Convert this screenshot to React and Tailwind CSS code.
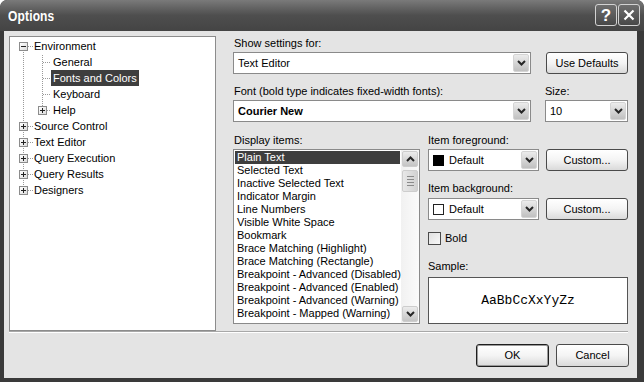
import React from "react";

const SANS = "font-['Liberation_Sans',Arial,sans-serif]";

function Chevron({ up = false }) {
  return (
    <svg width="9" height="6" viewBox="0 0 9 6">
      <path
        d={up ? "M1 5 L4.5 1.5 L8 5" : "M1 1 L4.5 4.5 L8 1"}
        stroke="#262626"
        strokeWidth="2"
        fill="none"
      />
    </svg>
  );
}

function DropBtn() {
  return (
    <div className="w-[16px] h-[18px] rounded-[2px] border border-[#d4d4d4] bg-gradient-to-b from-[#ececec] to-[#c0c0c0] flex items-center justify-center">
      <Chevron />
    </div>
  );
}

function Combo({ w, children }) {
  return (
    <div className={`flex items-center h-[22px] bg-white border border-[#8a8a8a] pl-[4px] pr-[1px] ${w}`}>
      <div className="flex-1 flex items-center min-w-0 text-[11px] text-black">{children}</div>
      <DropBtn />
    </div>
  );
}

function Btn({ children, w = "w-[82px]", h = "h-[22px]", def = false }) {
  return (
    <div
      className={`${w} ${h} flex items-center justify-center rounded-[3px] border ${
        def ? "border-[#1e1e1e] shadow-[inset_0_0_0_1px_#9a9a9a]" : "border-[#4a4a4a]"
      } bg-gradient-to-b from-white via-[#f4f4f4] to-[#dadada] text-[11px] text-black`}
    >
      {children}
    </div>
  );
}

function Expander({ plus }) {
  return (
    <div className="relative z-10 w-[9px] h-[9px] border border-[#8c8c8c] bg-gradient-to-br from-white to-[#dcdcdc] flex items-center justify-center shrink-0">
      <div className="absolute w-[5px] h-[1px] bg-[#222]" />
      {plus && <div className="absolute w-[1px] h-[5px] bg-[#222]" />}
    </div>
  );
}

function TreeRoot({ label, plus = true }) {
  return (
    <div className="h-[16px] flex items-center pl-[9px]">
      <Expander plus={plus} />
      <span className="ml-[5px] px-[1px] leading-[16px]">{label}</span>
    </div>
  );
}

function TreeChild({ label, selected = false, expander = false }) {
  return (
    <div className="h-[16px] flex items-center pl-[28px]">
      {expander ? <Expander plus /> : <div className="w-[9px] shrink-0" />}
      <span
        className={`ml-[4px] px-[2px] h-[16px] leading-[16px] ${
          selected ? "bg-[#3e3e3e] text-white" : "text-black"
        }`}
      >
        {label}
      </span>
    </div>
  );
}

function Tree() {
  const dot = { stroke: "#9a9a9a", strokeWidth: 1, strokeDasharray: "1 1" };
  return (
    <div className="relative w-[207px] h-[295px] bg-white border border-[#8c8c8c] text-[11px] text-black pt-[1px]">
      <svg className="absolute left-0 top-0 pointer-events-none" width="205" height="200">
        <line x1="13.5" y1="9" x2="13.5" y2="153" {...dot} />
        <line x1="32.5" y1="18" x2="32.5" y2="73" {...dot} />
        {[9, 89, 105, 121, 137, 153].map((y) => (
          <line key={y} x1="18" y1={y + 0.5} x2="23" y2={y + 0.5} {...dot} />
        ))}
        {[25, 41, 57].map((y) => (
          <line key={y} x1="33" y1={y + 0.5} x2="41" y2={y + 0.5} {...dot} />
        ))}
        <line x1="37" y1="73.5" x2="41" y2="73.5" {...dot} />
      </svg>
      <TreeRoot label="Environment" plus={false} />
      <TreeChild label="General" />
      <TreeChild label="Fonts and Colors" selected />
      <TreeChild label="Keyboard" />
      <TreeChild label="Help" expander />
      <TreeRoot label="Source Control" />
      <TreeRoot label="Text Editor" />
      <TreeRoot label="Query Execution" />
      <TreeRoot label="Query Results" />
      <TreeRoot label="Designers" />
    </div>
  );
}

function ScrollBtn({ up }) {
  return (
    <div className="h-[16px] w-[16px] rounded-[2px] border border-[#cdcdcd] bg-gradient-to-b from-[#ececec] to-[#c4c4c4] flex items-center justify-center">
      <Chevron up={up} />
    </div>
  );
}

const ITEMS = [
  "Plain Text",
  "Selected Text",
  "Inactive Selected Text",
  "Indicator Margin",
  "Line Numbers",
  "Visible White Space",
  "Bookmark",
  "Brace Matching (Highlight)",
  "Brace Matching (Rectangle)",
  "Breakpoint - Advanced (Disabled)",
  "Breakpoint - Advanced (Enabled)",
  "Breakpoint - Advanced (Warning)",
  "Breakpoint - Mapped (Warning)",
];

function ListBox() {
  return (
    <div className="w-[187px] h-[175px] bg-white border border-[#8a8a8a] flex">
      <div className="flex-1 p-[1px] flex flex-col overflow-hidden">
        {ITEMS.map((t, i) => (
          <div
            key={t}
            className={`h-[13px] leading-[13px] px-[2px] text-[11px] whitespace-nowrap ${
              i === 0 ? "bg-[#3e3e3e] text-white" : "text-black"
            }`}
          >
            {t}
          </div>
        ))}
      </div>
      <div className="w-[18px] h-full flex flex-col items-center py-[1px] bg-gradient-to-r from-[#f1f1f1] to-[#fbfbfb]">
        <ScrollBtn up />
        <div className="mt-[3px] w-[16px] h-[22px] rounded-[2px] border border-[#cdcdcd] bg-gradient-to-r from-[#e8e8e8] to-[#d2d2d2] flex flex-col items-center justify-center gap-[2px]">
          <div className="w-[7px] h-[1px] bg-[#8a8a8a]" />
          <div className="w-[7px] h-[1px] bg-[#8a8a8a]" />
          <div className="w-[7px] h-[1px] bg-[#8a8a8a]" />
          <div className="w-[7px] h-[1px] bg-[#8a8a8a]" />
        </div>
        <div className="flex-1" />
        <ScrollBtn />
      </div>
    </div>
  );
}

function TitleButton({ children }) {
  return (
    <div className="w-[22px] h-[22px] rounded-[3px] border border-[#d2d2d2] bg-gradient-to-b from-[#6e6e6e] to-[#484848] flex items-center justify-center text-white">
      {children}
    </div>
  );
}

export default function App() {
  return (
    <div className={`${SANS} w-[644px] h-[382px] bg-[#3a3a3a] rounded-t-[7px] flex flex-col overflow-hidden`}>
      {/* Title bar */}
      <div className="h-[31px] shrink-0 flex items-center pl-[8px] pr-[4px] bg-gradient-to-b from-[#7a7a7a] via-[#4e4e4e] to-[#444444] rounded-t-[7px]">
        <div className="flex-1 text-white font-bold text-[15px] leading-none origin-left scale-x-[0.8] tracking-[0.2px]">
          Options
        </div>
        <div className="flex gap-[1px] mb-[1px]">
          <TitleButton>
            <span className="font-bold text-[17px] leading-none">?</span>
          </TitleButton>
          <TitleButton>
            <svg width="12" height="12" viewBox="0 0 12 12">
              <path d="M1.5 1.5 L10.5 10.5 M10.5 1.5 L1.5 10.5" stroke="white" strokeWidth="2.2" />
            </svg>
          </TitleButton>
        </div>
      </div>

      {/* Body */}
      <div className="flex-1 ml-[4px] mr-[7px] mb-[4px] bg-[#e4e4e4] flex flex-col">
        <div className="flex pt-[5px] pl-[5px] h-[300px]">
          <Tree />
          <div className="ml-[17px] w-[395px] flex flex-col text-[11px] text-black">
            <div className="mt-[1px] h-[13px] leading-[13px] pl-[1px]">Show settings for:</div>
            <div className="mt-[2px] flex items-center">
              <Combo w="w-[298px]">Text Editor</Combo>
              <div className="ml-[15px]">
                <Btn>Use Defaults</Btn>
              </div>
            </div>
            <div className="mt-[11px] h-[13px] leading-[13px] flex">
              <div className="w-[312px] pl-[1px]">Font (bold type indicates fixed-width fonts):</div>
              <div>Size:</div>
            </div>
            <div className="mt-[2px] flex items-center">
              <Combo w="w-[298px]">
                <span className="font-bold">Courier New</span>
              </Combo>
              <div className="ml-[14px]">
                <Combo w="w-[83px]">10</Combo>
              </div>
            </div>
            <div className="mt-[12px] flex">
              <div className="w-[187px] flex flex-col">
                <div className="h-[13px] leading-[13px] pl-[1px]">Display items:</div>
                <div className="mt-[2px]">
                  <ListBox />
                </div>
              </div>
              <div className="ml-[8px] w-[200px] flex flex-col">
                <div className="h-[13px] leading-[13px]">Item foreground:</div>
                <div className="mt-[2px] flex items-center">
                  <Combo w="w-[111px]">
                    <div className="w-[11px] h-[11px] bg-black mr-[5px]" />
                    Default
                  </Combo>
                  <div className="ml-[7px]">
                    <Btn>Custom...</Btn>
                  </div>
                </div>
                <div className="mt-[11px] h-[13px] leading-[13px]">Item background:</div>
                <div className="mt-[3px] flex items-center">
                  <Combo w="w-[111px]">
                    <div className="w-[11px] h-[11px] bg-white border border-[#222] mr-[5px]" />
                    Default
                  </Combo>
                  <div className="ml-[7px]">
                    <Btn>Custom...</Btn>
                  </div>
                </div>
                <div className="mt-[12px] h-[13px] flex items-center">
                  <div className="w-[13px] h-[13px] border border-[#4a4a4a] bg-gradient-to-br from-[#e0e0e0] to-[#f8f8f8]" />
                  <span className="ml-[4px] leading-[13px]">Bold</span>
                </div>
                <div className="mt-[15px] h-[13px] leading-[13px]">Sample:</div>
                <div className="mt-[4px] w-[200px] h-[47px] bg-white border border-[#555] flex items-center justify-center">
                  <span className="font-['Liberation_Mono','Courier_New',monospace] text-[13px] text-black">
                    AaBbCcXxYyZz
                  </span>
                </div>
              </div>
            </div>
          </div>
        </div>
        <div className="ml-[5px] w-[619px] h-[1px] bg-[#a8a8a8]" />
        <div className="ml-[5px] w-[619px] h-[1px] bg-white" />
        <div className="mt-[11px] flex justify-end pr-[8px] gap-[7px]">
          <Btn w="w-[73px]" h="h-[23px]" def>
            OK
          </Btn>
          <Btn w="w-[73px]" h="h-[23px]">
            Cancel
          </Btn>
        </div>
      </div>
    </div>
  );
}
